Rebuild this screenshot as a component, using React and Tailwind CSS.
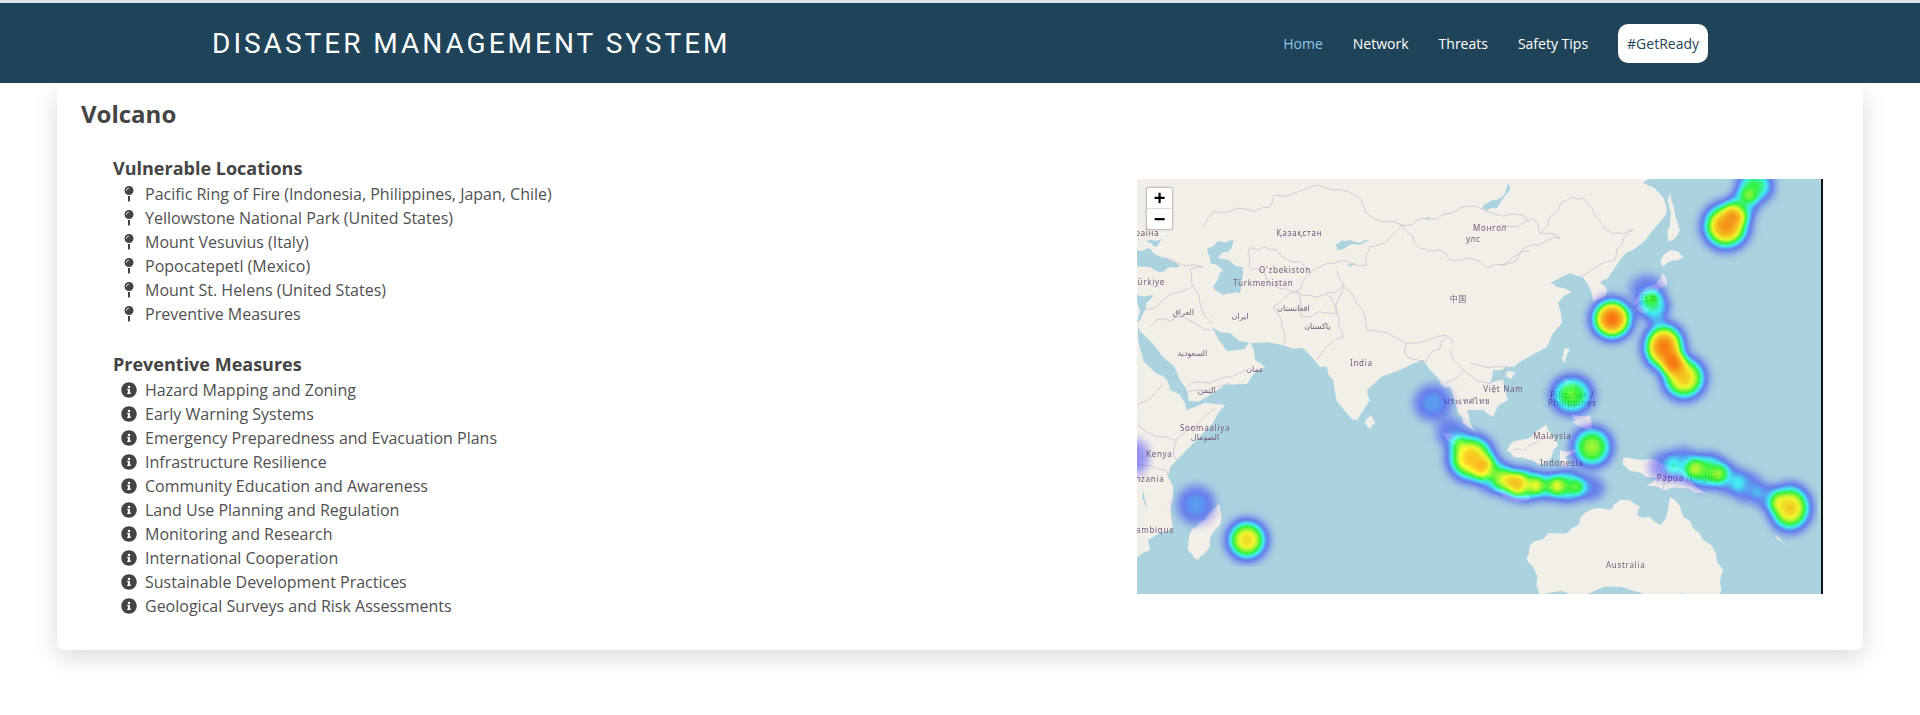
import { FaInfoCircle, FaMapPin } from 'react-icons/fa';

const locations = [
  'Pacific Ring of Fire (Indonesia, Philippines, Japan, Chile)',
  'Yellowstone National Park (United States)',
  'Mount Vesuvius (Italy)',
  'Popocatepetl (Mexico)',
  'Mount St. Helens (United States)',
  'Preventive Measures',
];

const measures = [
  'Hazard Mapping and Zoning',
  'Early Warning Systems',
  'Emergency Preparedness and Evacuation Plans',
  'Infrastructure Resilience',
  'Community Education and Awareness',
  'Land Use Planning and Regulation',
  'Monitoring and Research',
  'International Cooperation',
  'Sustainable Development Practices',
  'Geological Surveys and Risk Assessments',
];

// coords are read off the zoomed crops, these convert them to map pixels
const z4 = (pts) => pts.map(([x, y]) => [x / 3 - 7, y / 3 - 9]);
const z5 = (pts) => pts.map(([x, y]) => [x / 3 + 363, y / 3 - 9]);
const z6 = (pts) => pts.map(([x, y]) => [x / 3 - 7, y / 3 + 201]);
const z7 = (pts) => pts.map(([x, y]) => [x / 3 + 343, y / 3 + 221]);

// fixed wobble so coasts and borders don't look like straight lines
const wobble = (x, y) => {
  const s = Math.sin(x * 12.9898 + y * 78.233) * 43758.5453;
  return s - Math.floor(s) - 0.5;
};
const rough = (pts, closed, rounds = 2) => {
  let out = pts;
  for (let r = 0; r < rounds; r++) {
    const next = [];
    const n = closed ? out.length : out.length - 1;
    for (let i = 0; i < n; i++) {
      const a = out[i];
      const b = out[(i + 1) % out.length];
      const dx = b[0] - a[0];
      const dy = b[1] - a[1];
      const k = wobble(a[0] + b[0], a[1] + b[1]) * 0.32;
      next.push(a, [(a[0] + b[0]) / 2 - dy * k, (a[1] + b[1]) / 2 + dx * k]);
    }
    if (!closed) next.push(out[out.length - 1]);
    out = next;
  }
  return out;
};
const str = (pts) => pts.map((p) => p.map((v) => v.toFixed(1)).join(',')).join(' ');

const mainlandEdge = [
  [513, 0], [506, 4], [526, 18], [530, 34], [516, 51], [496, 71], [483, 81], [470, 100], [463, 104],
  [470, 111], [466, 119], [456, 123], [450, 104], [445, 98], [433, 94], [413, 104], [420, 108], [435, 113],
  [421, 124], [425, 144], [410, 168], [383, 183], [370, 188], [356, 191], [353, 204], [366, 201], [371, 221],
  [356, 238], [346, 231], [330, 231], [333, 244], [343, 258], [326, 244], [321, 234], [313, 208], [306, 208],
  [293, 191], [286, 181], [263, 191], [230, 211], [233, 221], [220, 241], [213, 238], [196, 201], [190, 188],
  [183, 188], [166, 169], [146, 166], [115, 164], [93, 154], [75, 148], [90, 172], [108, 170], [113, 163],
  [118, 181], [128, 188], [110, 205], [70, 218], [52, 222], [43, 201], [26, 178], [5, 154], [1, 148], [2, 165],
  [20, 195], [30, 201], [33, 211], [48, 224], [50, 231], [88, 226], [76, 244], [40, 281], [31, 298], [36, 318],
  [34, 335], [36, 351], [11, 361], [13, 371], [0, 379],
];
const mainland = [[0, 0], ...rough(mainlandEdge, false, 1)];

const islands = [
  z6([[265, 370], [275, 410], [240, 500], [205, 540], [175, 510], [175, 480], [200, 440], [230, 410]]),
  z6([[705, 130], [720, 105], [735, 130], [720, 147]]),
  z5([[510, 70], [525, 130], [540, 180], [505, 215], [510, 150]]),
  z5([[510, 240], [550, 260], [490, 290], [480, 275]]),
  z5([[490, 310], [500, 345], [430, 390], [400, 405], [430, 360], [470, 340]]),
  z5([[415, 400], [450, 415], [430, 430], [410, 420]]),
  z5([[195, 535], [210, 540], [195, 578], [185, 565]]),
  z5([[20, 605], [50, 605], [35, 625], [18, 620]]),
  z5([[195, 625], [225, 640], [215, 680], [190, 670]]),
  z5([[215, 735], [270, 735], [270, 750], [225, 750]]),
  z7([[85, 140], [160, 105], [200, 75], [235, 135], [215, 170], [180, 195], [120, 170]]),
  z7([[240, 150], [290, 150], [255, 170], [270, 205], [245, 200]]),
  z7([[270, 70], [300, 50], [335, 60], [335, 85], [300, 80]]),
  z7([[430, 175], [490, 180], [550, 195], [620, 220], [690, 285], [600, 265], [550, 270], [500, 255], [530, 235], [470, 215], [430, 195]]),
  z7([[150, 440], [160, 425], [260, 400], [320, 335], [390, 330], [420, 300], [480, 320], [470, 345], [540, 375], [570, 290], [610, 350], [670, 420], [730, 510], [720, 585], [500, 585], [400, 560], [310, 585], [180, 585], [140, 480]]),
  z7([[885, 408], [930, 435], [905, 425]]),
  z6([[935, 155], [985, 165], [1040, 230], [1090, 290], [1060, 300], [990, 260]]),
  z6([[1090, 330], [1200, 345], [1200, 360], [1120, 350]]),
  z6([[1130, 210], [1200, 190], [1200, 240], [1150, 230]]),
];

const waters = [
  z4([[20, 240], [60, 235], [110, 265], [150, 290], [100, 305], [50, 290], [20, 290]]),
  z4([[45, 215], [110, 205], [80, 230]]),
  z4([[20, 375], [70, 375], [40, 430], [20, 470]]),
  z4([[230, 240], [260, 215], [310, 210], [300, 240], [265, 265], [320, 290], [340, 305], [330, 370], [280, 375], [250, 350], [280, 300], [240, 280]]),
  z4([[310, 285], [340, 290], [335, 310], [312, 305]]),
  z4([[615, 225], [660, 210], [720, 212], [670, 222], [625, 240]]),
  z4([[1055, 115], [1100, 90], [1135, 40], [1140, 60], [1100, 115], [1070, 122]]),
  z4([[640, 285], [675, 280], [660, 290]]),
  z4([[890, 140], [900, 145], [890, 150]]),
  z6([[40, 335], [48, 370], [52, 400], [44, 375]]),
];

const borders = [
  z4([[220, 170], [250, 125], [320, 115], [420, 110], [435, 75], [560, 45], [655, 65], [710, 130], [815, 165]]),
  z4([[815, 165], [775, 210], [720, 230], [710, 285], [620, 275], [580, 285], [540, 310]]),
  z4([[358, 295], [358, 235], [400, 230], [470, 270], [540, 300]]),
  z4([[358, 300], [400, 300], [430, 345], [510, 360], [540, 310]]),
  z4([[430, 410], [500, 365], [580, 375], [640, 345], [620, 300]]),
  z4([[430, 410], [455, 470], [465, 520]]),
  z4([[500, 365], [515, 440], [620, 430], [590, 375]]),
  z4([[620, 430], [640, 345], [680, 400], [710, 480], [830, 520], [950, 495], [970, 520]]),
  z4([[620, 430], [640, 500], [560, 570]]),
  z4([[815, 165], [870, 235], [930, 240], [960, 270], [1070, 295], [1170, 250], [1200, 245]]),
  z4([[815, 165], [880, 145], [960, 130], [985, 115], [1090, 130], [1200, 155]]),
  z4([[110, 265], [220, 290], [180, 300], [190, 350], [245, 460]]),
  z4([[50, 420], [150, 365], [185, 350]]),
  z4([[60, 470], [80, 450], [160, 440], [245, 480]]),
  z4([[170, 650], [260, 630], [350, 600]]),
  z4([[830, 520], [830, 560], [890, 575], [895, 560], [950, 500]]),
  z4([[960, 540], [1000, 600], [950, 640]]),
  z4([[1000, 600], [1080, 640], [1130, 590]]),
  z4([[1020, 580], [1130, 590]]),
  z5([[0, 165], [100, 145], [120, 190], [180, 205], [120, 225], [60, 250], [45, 275], [0, 285]]),
  z5([[120, 190], [185, 95], [250, 85], [300, 155], [340, 190], [400, 180], [350, 240], [345, 270], [245, 320]]),
  z6([[20, 80], [75, 40], [100, 10]]),
  z6([[20, 130], [100, 170], [140, 180], [255, 85]]),
  z6([[140, 180], [140, 240]]),
  z6([[20, 255], [105, 270], [115, 290]]),
  z6([[160, 40], [300, 10]]),
  z7([[550, 190], [550, 270]]),
  z7([[95, 150], [165, 130], [215, 105]]),
];

const labels = [
  [z4([[88, 190]])[0], 'Україна', 'end'],
  [z4([[508, 188]])[0], 'Қазақстан'],
  [z4([[1080, 173]])[0], 'Монгол'],
  [z4([[1030, 208]])[0], 'улс'],
  [z4([[465, 300]])[0], "O'zbekiston"],
  [z4([[400, 338]])[0], 'Türkmenistan'],
  [z4([[105, 337]])[0], 'Türkiye', 'end'],
  [z4([[160, 425]])[0], 'العراق'],
  [z4([[330, 438]])[0], 'ایران'],
  [z4([[490, 415]])[0], 'افغانستان'],
  [z4([[562, 468]])[0], 'پاکستان'],
  [z4([[985, 388]])[0], '中国'],
  [z4([[187, 550]])[0], 'السعودية'],
  [z4([[375, 596]])[0], 'عمان'],
  [z4([[694, 580]])[0], 'India'],
  [z6([[230, 30]])[0], 'اليمن'],
  [z6([[225, 145]])[0], 'Soomaaliya'],
  [z6([[225, 172]])[0], 'الصومال'],
  [z6([[88, 222]])[0], 'Kenya'],
  [z6([[103, 296]])[0], 'Tanzania', 'end'],
  [z6([[133, 450]])[0], 'Mozambique', 'end'],
  [z6([[1120, 28]])[0], 'Việt Nam'],
  [z6([[1012, 62]])[0], 'ประเทศไทย'],
  [z5([[447, 384]])[0], '日本'],
  [z5([[217, 675]])[0], 'Pilipinas /'],
  [z5([[217, 700]])[0], 'Philippines'],
  [z7([[217, 108]])[0], 'Malaysia'],
  [z7([[245, 190]])[0], 'Indonesia'],
  [z7([[623, 235]])[0], 'Papua Niugini'],
  [z7([[437, 494]])[0], 'Australia'],
];

// [x, y, rx, ry, peak] - drawn as alpha, the filter turns alpha into the heat colours
const heat = [
  [589, 47, 31, 31, 0.92],
  [605, 27, 21, 21, 0.55],
  [618, 7, 24, 23, 0.72],
  [475, 140, 28, 28, 0.95],
  [516, 127, 21, 20, 0.68],
  [510, 110, 22, 18, 0.42],
  [527, 168, 28, 32, 0.94],
  [547, 199, 29, 29, 0.87],
  [538, 185, 15, 15, 0.3],
  [435, 216, 28, 26, 0.75],
  [455, 268, 27, 27, 0.79],
  [296, 224, 24, 23, 0.5],
  [59, 326, 24, 24, 0.5],
  [110, 361, 27, 27, 0.86],
  [0, 278, 15, 22, 0.42],
  [314, 254, 19, 19, 0.45],
  [334, 279, 31, 31, 0.88],
  [356, 296, 23, 23, 0.6],
  [372, 303, 21, 21, 0.6],
  [388, 306, 24, 22, 0.76],
  [410, 307, 20, 19, 0.6],
  [430, 307, 23, 21, 0.72],
  [452, 309, 20, 16, 0.45],
  [527, 287, 19, 19, 0.42],
  [546, 286, 22, 22, 0.52],
  [570, 292, 28, 23, 0.74],
  [592, 300, 20, 20, 0.46],
  [610, 308, 20, 20, 0.48],
  [630, 318, 18, 18, 0.42],
  [653, 329, 28, 31, 0.87],
];

function VolcanoMap() {
  return (
    <div className="relative w-[686px] h-[415px] shrink-0 mt-[8px] border-r-2 border-[#111] overflow-hidden bg-[#aad3df]">
      <svg viewBox="0 0 684 415" className="block w-[684px] h-[415px]">
        <defs>
          <filter id="soft" x="-2%" y="-2%" width="104%" height="104%">
            <feGaussianBlur stdDeviation="0.55" />
          </filter>
          <filter id="heatColors" x="0" y="0" width="100%" height="100%" colorInterpolationFilters="sRGB">
            <feGaussianBlur stdDeviation="3.5" />
            <feColorMatrix values="0 0 0 1 0  0 0 0 1 0  0 0 0 1 0  0 0 0 1 0" />
            <feComponentTransfer>
              <feFuncR type="table" tableValues="0 0 0 0 0 0 0 0 1 1 1" />
              <feFuncG type="table" tableValues="0 0 0 0 0 0.5 1 1 1 0.5 0" />
              <feFuncB type="table" tableValues="1 1 1 1 1 1 1 0 0 0 0" />
            </feComponentTransfer>
          </filter>
          <radialGradient id="spot">
            <stop offset="0" stopColor="#000" stopOpacity="1" />
            <stop offset="0.38" stopColor="#000" stopOpacity="0.92" />
            <stop offset="0.58" stopColor="#000" stopOpacity="0.8" />
            <stop offset="0.65" stopColor="#000" stopOpacity="0.7" />
            <stop offset="0.77" stopColor="#000" stopOpacity="0.5" />
            <stop offset="0.88" stopColor="#000" stopOpacity="0.24" />
            <stop offset="1" stopColor="#000" stopOpacity="0" />
          </radialGradient>
        </defs>

        <g filter="url(#soft)">
          <polygon points={str(mainland)} fill="#f2efe9" />
          {islands.map((pts, i) => (
            <polygon key={i} points={str(rough(pts, true))} fill="#f2efe9" />
          ))}
          {waters.map((pts, i) => (
            <polygon key={i} points={str(rough(pts, true))} fill="#aad3df" />
          ))}
          {borders.map((pts, i) => (
            <polyline key={i} points={str(rough(pts, false))} fill="none" stroke="#c9b8c9" strokeWidth="0.7" />
          ))}
          <g className="[font-family:'Noto_Sans','DejaVu_Sans','Noto_Sans_CJK_SC',sans-serif]" fontSize="8" letterSpacing="0.7" fill="#745a78">
            {labels.map(([p, text, anchor]) => (
              <text key={text} x={p[0]} y={p[1] + 3} textAnchor={anchor || 'middle'}>{text}</text>
            ))}
          </g>
        </g>

        <g filter="url(#heatColors)">
          {heat.map(([x, y, rx, ry, peak], i) => (
            <ellipse key={i} cx={x} cy={y} rx={rx} ry={ry} fill="url(#spot)" opacity={peak} />
          ))}
        </g>
      </svg>

      <div className="absolute left-[9px] top-[8px] w-[27px] h-[43px] bg-white border border-[#c4c4c4] rounded-[3px] flex flex-col shadow-[0_0_2px_rgba(0,0,0,0.25)]">
        <div className="h-[21px] flex items-center justify-center border-b border-[#ddd] text-black font-bold text-[20px] leading-none [font-family:'Liberation_Sans',sans-serif]">+</div>
        <div className="h-[21px] flex items-center justify-center text-black font-bold text-[20px] leading-none [font-family:'Liberation_Sans',sans-serif]">−</div>
      </div>
    </div>
  );
}

function Section({ title, items, icon, className }) {
  return (
    <div className={className}>
      <h3 className="pl-[56px] text-[18px] leading-[27px] font-bold">{title}</h3>
      <ul>
        {items.map((item) => (
          <li key={item} className="flex items-center h-[24px] pl-[64px] text-[16px] text-[#505050]">
            <span className="w-[24px] shrink-0 flex justify-start text-[#444]">{icon}</span>
            {item}
          </li>
        ))}
      </ul>
    </div>
  );
}

export default function App() {
  return (
    <div className="min-h-[715px] bg-white [font-family:'Open_Sans',sans-serif] text-[#444]">
      <div className="relative z-10 border-t-[3px] border-[#dfe3e6] h-[83px] bg-[#1f4459] flex items-center justify-between px-[212px]">
        <h1 className="mt-[2px] text-white text-[28px] tracking-[3px] font-normal [font-family:Roboto,sans-serif]">DISASTER MANAGEMENT SYSTEM</h1>
        <nav className="flex items-center gap-[30px] text-[14px] font-medium text-white">
          <a className="text-[#8ec5ea] font-normal">Home</a>
          <a>Network</a>
          <a>Threats</a>
          <a>Safety Tips</a>
          <a className="bg-white text-[#1f4459] font-normal rounded-[10px] h-[39px] px-[9px] flex items-center">#GetReady</a>
        </nav>
      </div>

      <div className="mx-[57px] rounded-b-[8px] bg-white shadow-[0_8px_24px_rgba(0,0,0,0.14)] h-[567px] pt-[13px] pr-[40px] flex justify-between">
        <div>
          <h2 className="pl-[24px] text-[24px] leading-[36px] font-bold">Volcano</h2>
          <Section title="Vulnerable Locations" items={locations} icon={<FaMapPin className="w-[16px] h-[16px]" />} className="mt-[23px]" />
          <Section title="Preventive Measures" items={measures} icon={<FaInfoCircle className="w-[16px] h-[16px]" />} className="mt-[25px]" />
        </div>
        <div className="pt-[75px]">
          <VolcanoMap />
        </div>
      </div>
    </div>
  );
}
